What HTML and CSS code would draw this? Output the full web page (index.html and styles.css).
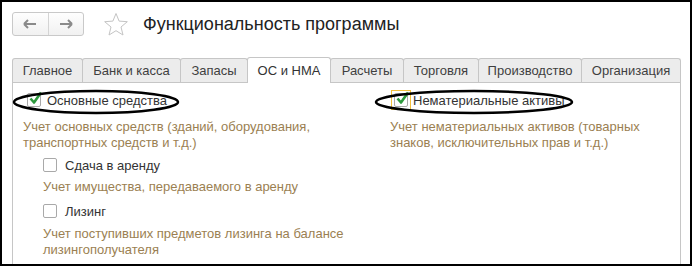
FILE: index.html
```html
<!DOCTYPE html>
<html lang="ru">
<head>
<meta charset="utf-8">
<link rel="stylesheet" href="styles.css">
</head>
<body>
<div class="frame">
  <header class="top">
    <div class="nav">
      <span class="nav-btn">
        <svg width="14" height="10" viewBox="0 0 14 10"><path d="M1 5h12M1 5l4-4M1 5l4 4" fill="none" stroke="#8a8a8a" stroke-width="2"/></svg>
      </span>
      <span class="nav-btn">
        <svg width="14" height="10" viewBox="0 0 14 10"><path d="M13 5H1M13 5L9 1M13 5L9 9" fill="none" stroke="#8a8a8a" stroke-width="2"/></svg>
      </span>
    </div>
    <svg class="star" width="26" height="25" viewBox="0 0 26 25"><path d="M13 1.5l3.1 7.6 8.2.6-6.3 5.3 2 8-7-4.3-7 4.3 2-8-6.3-5.3 8.2-.6z" fill="none" stroke="#c4c4c4" stroke-width="1"/></svg>
    <h1 class="title">Функциональность программы</h1>
  </header>

  <nav class="tabs">
    <span class="tab">Главное</span>
    <span class="tab">Банк и касса</span>
    <span class="tab">Запасы</span>
    <span class="tab active">ОС и НМА</span>
    <span class="tab">Расчеты</span>
    <span class="tab">Торговля</span>
    <span class="tab">Производство</span>
    <span class="tab">Организация</span>
  </nav>

  <section class="panel">
    <div class="col left">
      <label class="row first">
        <span class="cb checked"><svg width="15" height="15" viewBox="0 0 15 15"><path d="M2.5 7.5l3.5 4 7-10" fill="none" stroke="#2e9a3e" stroke-width="2.6" stroke-linejoin="round"/></svg></span>
        <span class="lbl">Основные средства</span>
      </label>
      <p class="desc d1">Учет основных средств (зданий, оборудования,<br>транспортных средств и т.д.)</p>
      <div class="sub">
        <label class="row r2">
          <span class="cb"></span>
          <span class="lbl">Сдача в аренду</span>
        </label>
        <p class="desc d2">Учет имущества, передаваемого в аренду</p>
        <label class="row r3">
          <span class="cb"></span>
          <span class="lbl">Лизинг</span>
        </label>
        <p class="desc d3">Учет поступивших предметов лизинга на балансе<br>лизингополучателя</p>
      </div>
    </div>
    <div class="col right">
      <label class="row first">
        <span class="focus"><span class="cb checked"><svg width="15" height="15" viewBox="0 0 15 15"><path d="M2.5 7.5l3.5 4 7-10" fill="none" stroke="#2e9a3e" stroke-width="2.6" stroke-linejoin="round"/></svg></span></span>
        <span class="lbl">Нематериальные активы</span>
      </label>
      <p class="desc d1">Учет нематериальных активов (товарных<br>знаков, исключительных прав и т.д.)</p>
    </div>
    <svg class="mark m1" width="168" height="26" viewBox="0 0 168 26"><ellipse cx="84" cy="13" rx="82" ry="11" fill="none" stroke="#000" stroke-width="2.5"/></svg>
    <svg class="mark m2" width="200" height="26" viewBox="0 0 200 26"><ellipse cx="100" cy="13" rx="98" ry="11" fill="none" stroke="#000" stroke-width="2.5"/></svg>
  </section>
</div>
</body>
</html>
```

FILE: styles.css
```css
* { box-sizing: border-box; }
html, body { margin: 0; padding: 0; background: #fff; }
body {
  width: 692px;
  height: 268px;
  overflow: hidden;
  font-family: "Liberation Sans", Arial, sans-serif;
  color: #333;
}
.frame {
  width: 692px;
  height: 266px;
  border: 2px solid #000;
  overflow: hidden;
  padding: 10px 0 0 10px;
}
.top {
  display: flex;
  align-items: center;
  height: 24px;
}
.nav {
  display: flex;
  width: 72px;
  height: 24px;
  border: 1px solid #c9c9c9;
  border-radius: 3px;
  background: linear-gradient(#fefefe, #f1f1f1);
}
.nav-btn {
  flex: 1;
  display: flex;
  align-items: center;
  justify-content: center;
}
.nav-btn + .nav-btn { border-left: 1px solid #d4d4d4; }
.star { margin-left: 19px; margin-top: 1px; }
.title {
  margin: 0 0 0 14px;
  font-size: 18px;
  font-weight: normal;
  color: #222;
  line-height: 24px;
}
.tabs {
  display: flex;
  align-items: flex-end;
  margin-top: 22px;
  height: 24px;
  position: relative;
  z-index: 1;
}
.tab {
  height: 24px;
  line-height: 23px;
  padding: 0;
  text-align: center;
  font-size: 13px;
  color: #3f3f3f;
  background: #ececec;
  border: 1px solid #c6c6c6;
  border-bottom: none;
  border-radius: 3px 3px 0 0;
  margin-right: -1px;
}
.tab:nth-child(1) { width: 71px; }
.tab:nth-child(2) { width: 99px; }
.tab:nth-child(3) { width: 68px; }
.tab:nth-child(4) { width: 84px; }
.tab:nth-child(5) { width: 74px; }
.tab:nth-child(6) { width: 76px; }
.tab:nth-child(7) { width: 104px; }
.tab:nth-child(8) { width: 100px; }
.tab.active {
  background: #fff;
  height: 26px;
  line-height: 26px;
  margin-bottom: -1px;
  color: #333;
  position: relative;
}
.panel {
  position: relative;
  width: 669px;
  height: 200px;
  border: 1px solid #c6c6c6;
  border-bottom: none;
  display: grid;
  grid-template-columns: 362px 1fr;
  padding-top: 7px;
}
.col.left { padding-left: 10px; }
.col.right { padding-left: 15px; }
.row {
  display: flex;
  align-items: center;
  height: 20px;
  font-size: 13px;
  color: #333;
}
.row.first { padding-left: 4px; }
.left .row.first .cb { margin-right: 6px; }
.cb {
  position: relative;
  width: 14px;
  height: 14px;
  border: 1px solid #a9a9a9;
  border-radius: 2px;
  background: #fff;
  margin-right: 8px;
  flex: none;
}
.cb svg { position: absolute; left: 0; top: -3px; }
.focus {
  display: flex;
  align-items: center;
  justify-content: center;
  width: 20px;
  height: 20px;
  border: 1px solid #f3c03c;
  margin-left: -3px;
  margin-right: 2px;
}
.focus .cb { margin-right: 0; }
.desc {
  margin: 0;
  font-size: 13px;
  line-height: 16px;
  color: #9b7f52;
}
.desc.d1 { margin-top: 9px; }
.sub { padding-left: 20px; }
.row.r2 { margin-top: 4px; }
.desc.d2 { margin-top: 4px; }
.row.r3 { margin-top: 6px; }
.desc.d3 { margin-top: 5px; }
.mark { position: absolute; }
.mark.m1 { left: -1px; top: 6px; }
.mark.m2 { left: 361px; top: 6px; }
```
